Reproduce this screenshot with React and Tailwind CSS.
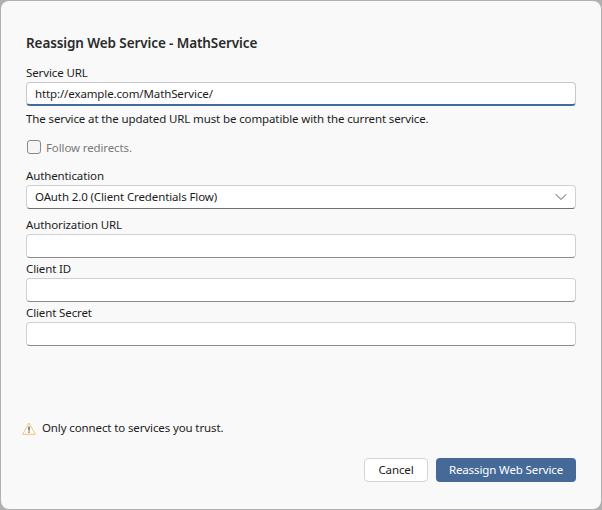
import { ChevronDown } from "lucide-react";

const font = "font-['Noto_Sans','Liberation_Sans',sans-serif]";
const body = "text-[11.5px] tracking-[-0.12px]";

const Field = ({ label, value, mt }) => (
    <div className={mt}>
        <div className={`h-[15px] leading-[15px] text-[#1c1c1c] ${body}`}>{label}</div>
        <div className={`mt-[2px] h-[24px] rounded-[4px] border border-[#d0d0d0] border-b-[#8a8a8a] bg-white px-[8px] leading-[22px] text-[#1c1c1c] ${body}`}>
            {value}
        </div>
    </div>
);

const App = () => {
    return (
        <div className="h-[510px] w-[602px] overflow-hidden bg-[#b0b0b0] p-[1px]">
            <div className={`flex h-[508px] w-[600px] flex-col rounded-[8px] bg-[#f9f9f9] pt-[34px] pr-[25px] pl-[25px] ${font}`}>
                {/* Title */}
                <h1 className="h-[16px] text-[13.5px] leading-[16px] font-semibold tracking-[-0.1px] text-[#2a2a2a]">
                    Reassign Web Service - MathService
                </h1>

                {/* Service URL */}
                <div className={`mt-[14px] h-[15px] leading-[15px] text-[#1c1c1c] ${body}`}>Service URL</div>
                <div className={`mt-[2px] h-[24px] rounded-[4px] border border-[#c8c8c8] border-b-2 border-b-[#446a9a] bg-white px-[8px] leading-[21px] text-[#1c1c1c] ${body}`}>
                    http://example.com/MathService/
                </div>
                <p className={`mt-[5px] h-[16px] leading-[16px] text-[#1c1c1c] ${body}`}>
                    The service at the updated URL must be compatible with the current service.
                </p>

                {/* Follow redirects */}
                <div className="mt-[13px] flex h-[14px] items-center gap-[5px]">
                    <span className="ml-[1px] h-[14px] w-[14px] rounded-[3px] border border-[#8a8a8a] bg-[#f5f5f5]" />
                    <span className={`leading-[15px] text-[#7a7a7a] ${body}`}>Follow redirects.</span>
                </div>

                {/* Authentication */}
                <div className={`mt-[14px] h-[15px] leading-[15px] text-[#1c1c1c] ${body}`}>Authentication</div>
                <div className={`mt-[2px] flex h-[24px] items-center justify-between rounded-[4px] border border-[#d0d0d0] border-b-[#6e6e6e] bg-white pr-[4px] pl-[8px] text-[#1c1c1c] ${body}`}>
                    <span>OAuth 2.0 (Client Credentials Flow)</span>
                    <ChevronDown size={20} strokeWidth={1.2} className="text-[#555]" />
                </div>

                <Field label="Authorization URL" mt="mt-[8px]" />
                <Field label="Client ID" mt="mt-[3px]" />
                <Field label="Client Secret" mt="mt-[3px]" />

                {/* Trust warning */}
                <div className="mt-auto -ml-[4px] flex h-[16px] items-center gap-[6px]">
                    <svg width="14" height="13" viewBox="0 0 14 13" fill="none">
                        <path d="M7 1 L13.3 12.3 H0.7 Z" stroke="#f0c27e" strokeWidth="1" strokeLinejoin="round" fill="#fefcf8" />
                        <path d="M7 4.4 V8.4" stroke="#555" strokeWidth="1.4" />
                        <path d="M7 9.4 V10.8" stroke="#555" strokeWidth="1.4" />
                    </svg>
                    <span className={`leading-[16px] text-[#1c1c1c] ${body}`}>Only connect to services you trust.</span>
                </div>

                {/* Footer buttons */}
                <div className="mt-[22px] mb-[27px] flex justify-end gap-[8px]">
                    <button className={`h-[24px] w-[64px] rounded-[4px] border border-[#d4d4d4] bg-white text-[#1c1c1c] ${body}`}>
                        Cancel
                    </button>
                    <button className={`h-[24px] w-[140px] rounded-[4px] bg-[#466a98] text-white ${body}`}>
                        Reassign Web Service
                    </button>
                </div>
            </div>
        </div>
    );
};

export default App;
